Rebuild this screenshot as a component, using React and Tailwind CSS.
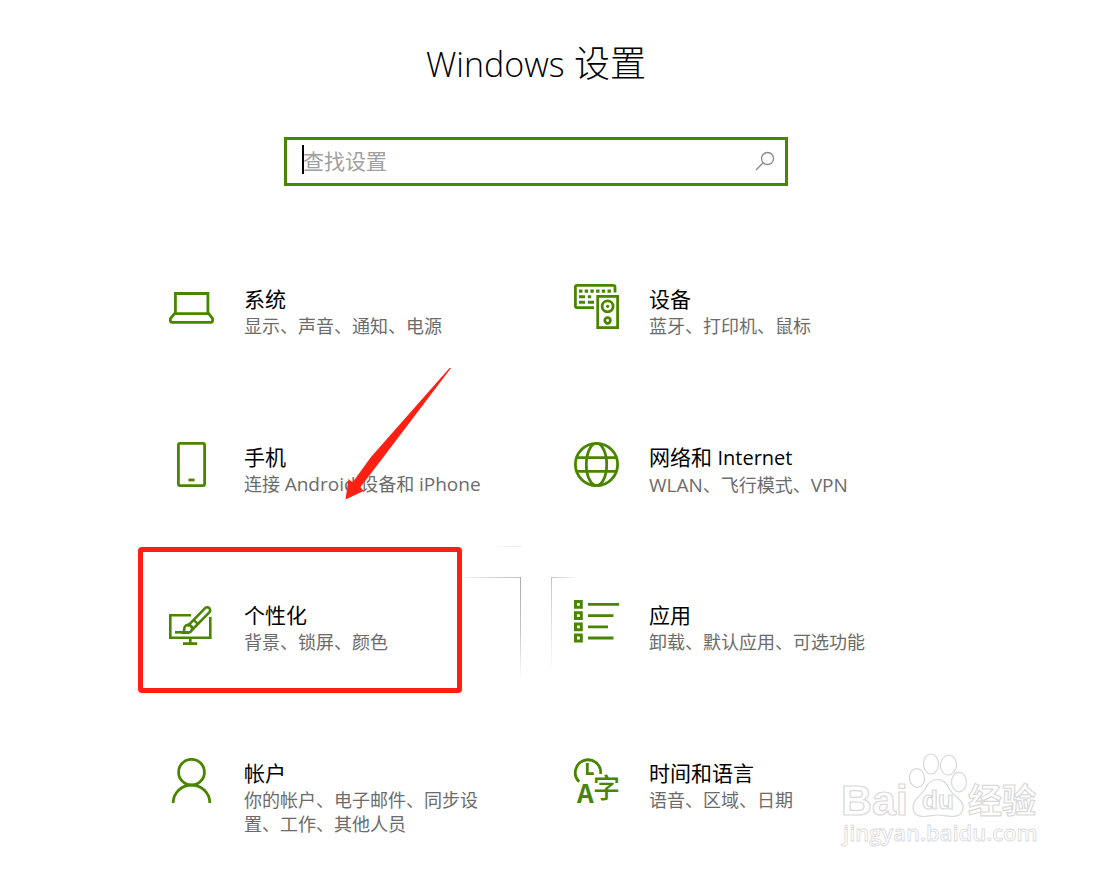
import React, { useState } from 'react'

const LaptopIcon = () => (
    <svg viewBox="0 0 45 45" className="size-[45px]" fill="none" stroke="currentColor" strokeWidth="2.8" aria-hidden="true">
        <path d="M6.4 30V9.5H38.9V30" />
        <path d="M5.5 29.6H39.8L43.6 34.6V36.6Q43.6 38.3 42 38.3H3Q1.4 38.3 1.4 36.6V34.6Z" strokeLinejoin="round" />
    </svg>
)

const DevicesIcon = () => (
    <svg viewBox="0 0 45 45" className="size-[45px]" fill="none" stroke="currentColor" strokeWidth="2.8" aria-hidden="true">
        <path d="M20 23.7H3.2Q1.4 23.7 1.4 22V3Q1.4 1.4 3.2 1.4H39.2Q41 1.4 41 3V8.5" />
        <g fill="currentColor" stroke="none">
            <path d="M5 5.5h3.4v3.2H5zM10.7 5.5h3.4v3.2h-3.4zM16.4 5.5h3.4v3.2h-3.4zM22.1 5.5h3.4v3.2h-3.4zM27.8 5.5h3.4v3.2h-3.4zM33.5 5.5h3.4v3.2h-3.4z" />
            <path d="M5 11.2h6v3H5zM13.8 11.2h3.4v3h-3.4zM5 16.8h6v3H5zM13.8 16.8h6.2v3h-6.2z" />
            <circle cx="33.6" cy="22.3" r="1.6" />
        </g>
        <rect x="23.7" y="12.4" width="19.9" height="31.2" />
        <circle cx="33.6" cy="22.3" r="5.5" />
        <circle cx="33.6" cy="36.5" r="2.8" />
    </svg>
)

const PhoneIcon = () => (
    <svg viewBox="0 0 45 45" className="size-[45px]" fill="none" stroke="currentColor" strokeWidth="2.8" aria-hidden="true">
        <rect x="9.4" y="1.4" width="26.2" height="42.2" rx="1.6" />
        <path d="M19.4 38h6.2" />
    </svg>
)

const GlobeIcon = () => (
    <svg viewBox="0 0 45 45" className="size-[45px]" fill="none" stroke="currentColor" strokeWidth="2.8" aria-hidden="true">
        <circle cx="22.5" cy="22.5" r="21.1" />
        <ellipse cx="22.5" cy="22.5" rx="10.2" ry="21.1" />
        <path d="M2.5 15.7h40M2.5 29.3h40" />
    </svg>
)

const BrushIcon = () => (
    <svg viewBox="0 0 45 45" className="size-[45px]" fill="none" stroke="currentColor" strokeWidth="2.6" aria-hidden="true">
        <path d="M22 15.3H1.3V37.8H41.3V17" />
        <path d="M21.3 38v5.5M14 43.6h14.2" />
        <path d="M18.3 26.3 36.1 8.1a2.9 2.9 0 0 1 4.2 4.2L22.5 30.5" />
        <path d="M24.4 19.6l5 5" strokeWidth="2.2" />
        <path d="M20.3 24.2l4.6 4.6" strokeWidth="2.2" />
        <path d="M6 32.3H19" />
        <path d="M14.2 32.6Q15 31.2 15.3 29.4A3.9 3.9 0 1 1 19.2 32.6Z" />
    </svg>
)

const AppsIcon = () => (
    <svg viewBox="0 0 45 45" className="size-[45px]" fill="none" stroke="currentColor" strokeWidth="3" aria-hidden="true">
        <path d="M1.5 1.5h5.8v5.8H1.5zM1.5 12.7h5.8v5.8H1.5zM1.5 23.9h5.8v5.8H1.5zM1.5 35.1h5.8v5.8H1.5z" />
        <path d="M14 4.4h31M14 15.6h25.5M14 26.8h20M14 38h25.5" strokeWidth="2.8" />
    </svg>
)

const AccountIcon = () => (
    <svg viewBox="0 0 45 45" className="size-[45px]" fill="none" stroke="currentColor" strokeWidth="2.8" aria-hidden="true">
        <circle cx="22.5" cy="14.2" r="12.9" />
        <path d="M4.2 45a18.3 18 0 0 1 36.6 0" />
    </svg>
)

const LanguageIcon = () => (
    <svg viewBox="0 0 45 45" className="size-[45px] overflow-visible" fill="none" stroke="currentColor" strokeWidth="2.8" aria-hidden="true">
        <path d="M5.2 23.7A12.7 12.7 0 1 1 26.6 15.8" />
        <path d="M13.3 5v10.6h6.5" />
        <g fill="currentColor" stroke="none" fontFamily="Noto Sans CJK SC">
            <text x="3" y="45" fontSize="26" fontWeight="700">A</text>
            <text x="19" y="40" fontSize="27" fontWeight="500">字</text>
        </g>
    </svg>
)

// edge glow that the tiles get near the mouse pointer
const PhoneGlow = () => (
    <span className="absolute right-0 bottom-0 h-px w-8 bg-linear-to-l from-gray-200 to-transparent"></span>
)

const PersonalGlow = () => <>
    <span className="absolute right-0 top-0 h-px w-[70px] bg-linear-to-l from-[#bdbdbd] to-transparent"></span>
    <span className="absolute right-0 top-0 h-[104px] w-px bg-linear-to-b from-[#adadad] via-[#c4c4c4] to-transparent"></span>
</>

const AppsGlow = () => <>
    <span className="absolute left-0 top-0 h-px w-7 bg-linear-to-r from-[#c4c4c4] to-transparent"></span>
    <span className="absolute left-0 top-0 h-24 w-px bg-linear-to-b from-[#c4c4c4] to-transparent"></span>
</>

const Arrow = () => (
    <svg viewBox="0 0 112 140" className="absolute -top-[59px] left-[194px] z-10 w-[112px] h-[140px] pointer-events-none" fill="#ff2013" aria-hidden="true">
        <path d="M5.5 139.5 8.5 119 12.5 122.5 31 97 109.5 8H111L45 95 20.5 127 23.5 131Z" />
    </svg>
)

const RedBox = () => (
    <span className="absolute -top-[30px] -left-2 z-10 w-[324px] h-[146px] rounded border-5 border-[#ff2013] pointer-events-none"></span>
)

const tiles = [
    { title: '系统', desc: '显示、声音、通知、电源', Icon: LaptopIcon },
    { title: '设备', desc: '蓝牙、打印机、鼠标', Icon: DevicesIcon },
    { title: '手机', desc: <>连接 <Latin>Android</Latin> 设备和 <Latin>iPhone</Latin></>, Icon: PhoneIcon, extra: <><PhoneGlow /><Arrow /></> },
    { title: <>网络和 <span className="text-[20px]">Internet</span></>, desc: <><Latin>WLAN</Latin>、飞行模式、<Latin>VPN</Latin></>, Icon: GlobeIcon },
    { title: '个性化', desc: '背景、锁屏、颜色', Icon: BrushIcon, extra: <><PersonalGlow /><RedBox /></> },
    { title: '应用', desc: '卸载、默认应用、可选功能', Icon: AppsIcon, extra: <AppsGlow /> },
    { title: '帐户', desc: '你的帐户、电子邮件、同步设置、工作、其他人员', Icon: AccountIcon },
    { title: '时间和语言', desc: '语音、区域、日期', Icon: LanguageIcon },
]

function Latin({ children }) {
    return <span className="text-[19px]">{children}</span>
}

const Tile = ({ title, desc, Icon, extra }) => (
    <a href="#" className="relative flex items-start gap-[30px] h-32 pl-[23px] pr-8 pt-[23px]">
        <span className="shrink-0 text-[#4a8500]"><Icon /></span>
        <span className="min-w-0">
            <span className="block text-[21px] leading-[30px] text-black">{title}</span>
            <span className="block text-[18px] leading-6 text-[#6b6b6b]">{desc}</span>
        </span>
        {extra}
    </a>
)

const Watermark = () => (
    <svg viewBox="0 0 200 95" className="absolute right-[58px] bottom-6 w-[200px] h-[95px] pointer-events-none" fill="#ffffff" stroke="#d9d9d9" strokeWidth="1.2" aria-hidden="true">
        <g fontWeight="700">
            <text x="0" y="63" fontSize="43" fontFamily="Liberation Sans">Bai</text>
            <text x="127" y="61" fontSize="34" fontFamily="Noto Sans CJK SC">经验</text>
        </g>
        <text x="2" y="89" fontSize="22" fontWeight="600" strokeWidth="0.8" fontFamily="Open Sans">jingyan.baidu.com</text>
        <ellipse cx="76" cy="26" rx="7.5" ry="9.5" transform="rotate(-8 76 26)" />
        <ellipse cx="90" cy="12" rx="7.5" ry="10" />
        <ellipse cx="107.5" cy="13" rx="8" ry="10" transform="rotate(6 107 13)" />
        <ellipse cx="118" cy="30" rx="7.5" ry="9.8" />
        <path d="M96 27.5C103 27.5 106 32 109 38C113 45 122 47 122 55C122 62 117 64.5 111 64.5C105 64.5 102 63 97 63C92 63 89 64.5 83 64.5C76 64.5 72 61 72 55C72 47 80 44 84 37C87 31 90 27.5 96 27.5Z" />
        <text x="81" y="57" fontSize="26" fontFamily="Liberation Sans" fontWeight="700">du</text>
    </svg>
)

export default function App() {
    const [search, setSearch] = useState('')

    return (
        <main className="relative min-h-screen bg-white pt-10 pb-2 pr-[27px] font-['Open_Sans','Noto_Sans_CJK_SC',sans-serif]">
            <h1 className="text-center text-[36px] leading-[48px] font-light text-black">
                <span className="text-[34px]">Windows</span> 设置
            </h1>

            <div className="relative mx-auto mt-[49px] flex h-[49px] w-full max-w-[504px] items-center border-3 border-[#4a8500] bg-white pl-4 pr-2.5 pb-0.5">
                <input
                    type="text"
                    aria-label="查找设置"
                    placeholder="查找设置"
                    value={search}
                    onChange={(e) => setSearch(e.target.value)}
                    className="min-w-0 flex-1 text-[21px] leading-8 text-black placeholder:text-[#a0a0a0] outline-none"
                />
                {!search && <span className="absolute left-[15px] top-[5px] h-[29px] w-0.5 bg-black"></span>}
                <button type="button" aria-label="搜索" className="text-[#8a8a8a]">
                    <svg viewBox="0 0 20 20" className="size-5" fill="none" stroke="currentColor" strokeWidth="1.3">
                        <circle cx="12.5" cy="7.5" r="6" />
                        <path d="M8.2 11.8 1 19" />
                    </svg>
                </button>
            </div>

            <nav className="mx-auto mt-[75px] grid w-full max-w-[780px] grid-cols-2 gap-[30px]">
                {tiles.map((tile, i) => <Tile key={i} {...tile} />)}
            </nav>

            <Watermark />
        </main>
    )
}
